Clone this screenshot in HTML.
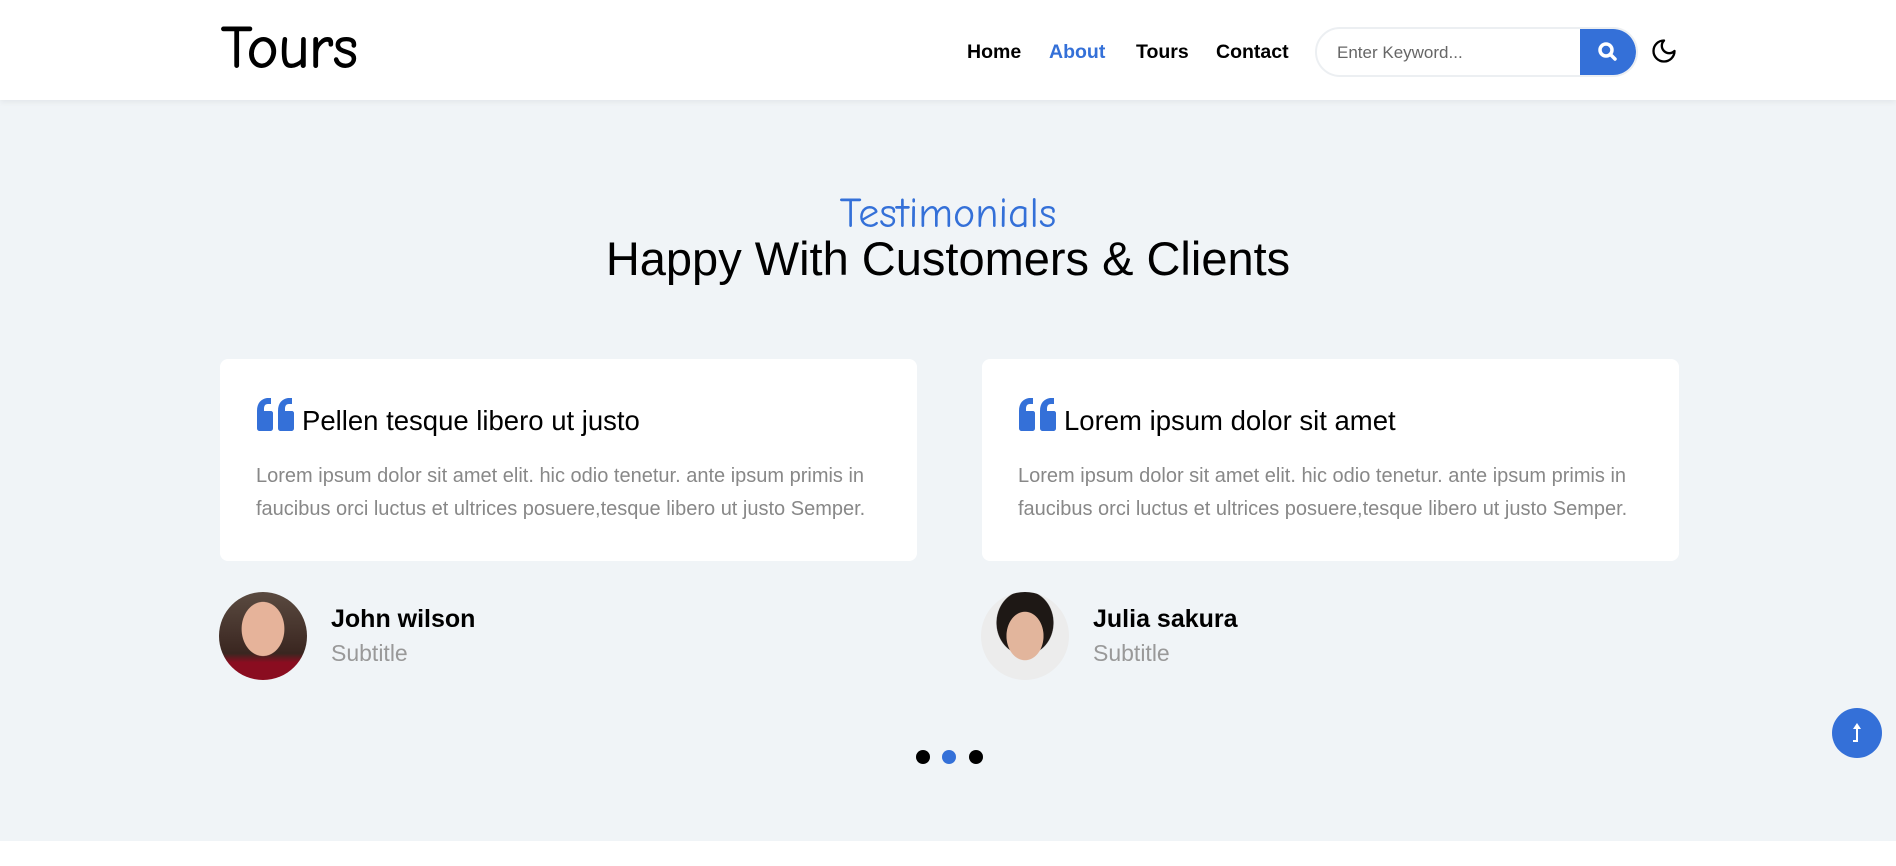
<!DOCTYPE html>
<html><head><meta charset="utf-8"><style>
*{margin:0;padding:0;box-sizing:border-box}
body{width:1896px;height:866px;background:#fff;font-family:"Liberation Sans",Arial,sans-serif;position:relative;overflow:hidden}
header{position:absolute;left:0;top:0;width:1896px;height:100px;background:#fff;box-shadow:0 2px 6px rgba(0,0,0,.06);z-index:2}
.logo{position:absolute;left:221px;top:18px;font-family:"Comic Sans MS","Comic Neue",cursive;font-size:60px;color:#000;line-height:1;-webkit-text-stroke:1px #000}
nav a{position:absolute;top:41px;font-size:19.5px;font-weight:bold;color:#000;text-decoration:none}
.search{position:absolute;left:1315px;top:27px;width:323px;height:50px;border:2px solid #eceff2;border-radius:25px;overflow:hidden;background:#fff}
.search span{position:absolute;left:20px;top:14px;font-size:17px;color:#666}
.search .btn{position:absolute;right:0;top:-2px;width:56px;height:50px;background:#3470d8;border-radius:0 25px 25px 0}
section{position:absolute;left:0;top:100px;width:1896px;height:741px;background:#f0f4f7}
.t1{position:absolute;left:0;width:1896px;top:193px;text-align:center;font-family:"Comic Sans MS","Comic Neue",cursive;font-size:42px;color:#3470d8;line-height:1}
.t2{position:absolute;left:0;width:1896px;top:233px;text-align:center;font-size:47px;color:#000;line-height:1.1}
.card{position:absolute;top:359px;width:697px;height:202px;background:#fff;border-radius:8px}
.card h3{position:absolute;left:82px;top:46px;font-size:27.5px;font-weight:normal;color:#000}
.card svg{position:absolute;left:37px;top:39px}
.card p{position:absolute;left:36px;top:101px;width:650px;font-size:20px;line-height:33px;color:#888}
.av{position:absolute;top:592px;width:88px;height:88px;border-radius:50%;overflow:hidden}
.nm{position:absolute;top:605px;font-size:25px;font-weight:bold;color:#000}
.sb{position:absolute;top:640px;font-size:23px;color:#999}
.dot{position:absolute;top:750px;width:14px;height:14px;border-radius:50%;background:#000}
.up{position:absolute;left:1832px;top:708px;width:50px;height:50px;border-radius:50%;background:#3470d8}
</style></head><body>
<header>
<div class="logo">Tours</div>
<nav><a style="left:967px">Home</a><a style="left:1049px;color:#3470d8">About</a><a style="left:1136px">Tours</a><a style="left:1216px">Contact</a></nav>
<div class="search"><span>Enter Keyword...</span><div class="btn"><svg width="56" height="50" viewBox="0 0 56 50"><circle cx="26" cy="23" r="6" fill="none" stroke="#fff" stroke-width="3.5"/><line x1="30.5" y1="27.5" x2="35" y2="32" stroke="#fff" stroke-width="3.5" stroke-linecap="round"/></svg></div></div>
<svg style="position:absolute;left:1650px;top:37px" width="28" height="28" viewBox="0 0 24 24"><path d="M12 3a6 6 0 0 0 9 9 9 9 0 1 1-9-9z" fill="none" stroke="#000" stroke-width="2" stroke-linejoin="round"/></svg>
</header>
<section></section>
<div class="t1">Testimonials</div>
<div class="t2">Happy With Customers &amp; Clients</div>

<div class="card" style="left:220px">
<svg width="40" height="33" viewBox="0 0 40 33"><path d="M0 30V13C0 5 4 1 10 0h4v6h-3c-3 0-4 2-4 5v2h7c1 0 2 1 2 2v15c0 2-1 3-3 3H3c-2 0-3-1-3-3z M21 30V13C21 5 25 1 31 0h4v6h-3c-3 0-4 2-4 5v2h7c1 0 2 1 2 2v15c0 2-1 3-3 3h-10c-2 0-3-1-3-3z" fill="#3470d8"/></svg>
<h3>Pellen tesque libero ut justo</h3>
<p>Lorem ipsum dolor sit amet elit. hic odio tenetur. ante ipsum primis in faucibus orci luctus et ultrices posuere,tesque libero ut justo Semper.</p></div>
<div class="card" style="left:982px">
<svg width="40" height="33" viewBox="0 0 40 33"><path d="M0 30V13C0 5 4 1 10 0h4v6h-3c-3 0-4 2-4 5v2h7c1 0 2 1 2 2v15c0 2-1 3-3 3H3c-2 0-3-1-3-3z M21 30V13C21 5 25 1 31 0h4v6h-3c-3 0-4 2-4 5v2h7c1 0 2 1 2 2v15c0 2-1 3-3 3h-10c-2 0-3-1-3-3z" fill="#3470d8"/></svg>
<h3>Lorem ipsum dolor sit amet</h3>
<p>Lorem ipsum dolor sit amet elit. hic odio tenetur. ante ipsum primis in faucibus orci luctus et ultrices posuere,tesque libero ut justo Semper.</p></div>

<div class="av" style="left:219px;background:radial-gradient(ellipse 30% 38% at 50% 42%,#e6b39a 0 80%,transparent 82%),linear-gradient(#5a4a40,#3a2620 70%,#8a0d20 80%)"></div>
<div class="nm" style="left:331px">John wilson</div><div class="sb" style="left:331px">Subtitle</div>
<div class="av" style="left:981px;background:radial-gradient(ellipse 26% 34% at 50% 50%,#e2b59c 0 80%,transparent 82%),radial-gradient(ellipse 40% 45% at 50% 35%,#1e1815 0 80%,transparent 82%),#ececec"></div>
<div class="nm" style="left:1093px">Julia sakura</div><div class="sb" style="left:1093px">Subtitle</div>

<div class="dot" style="left:916px"></div><div class="dot" style="left:942px;background:#3470d8"></div><div class="dot" style="left:969px"></div>
<div class="up"><svg width="50" height="50" viewBox="0 0 50 50"><path d="M25 15l-4 6h3v11h-3v2h5V21h3z" fill="#fff"/></svg></div>
</body></html>
